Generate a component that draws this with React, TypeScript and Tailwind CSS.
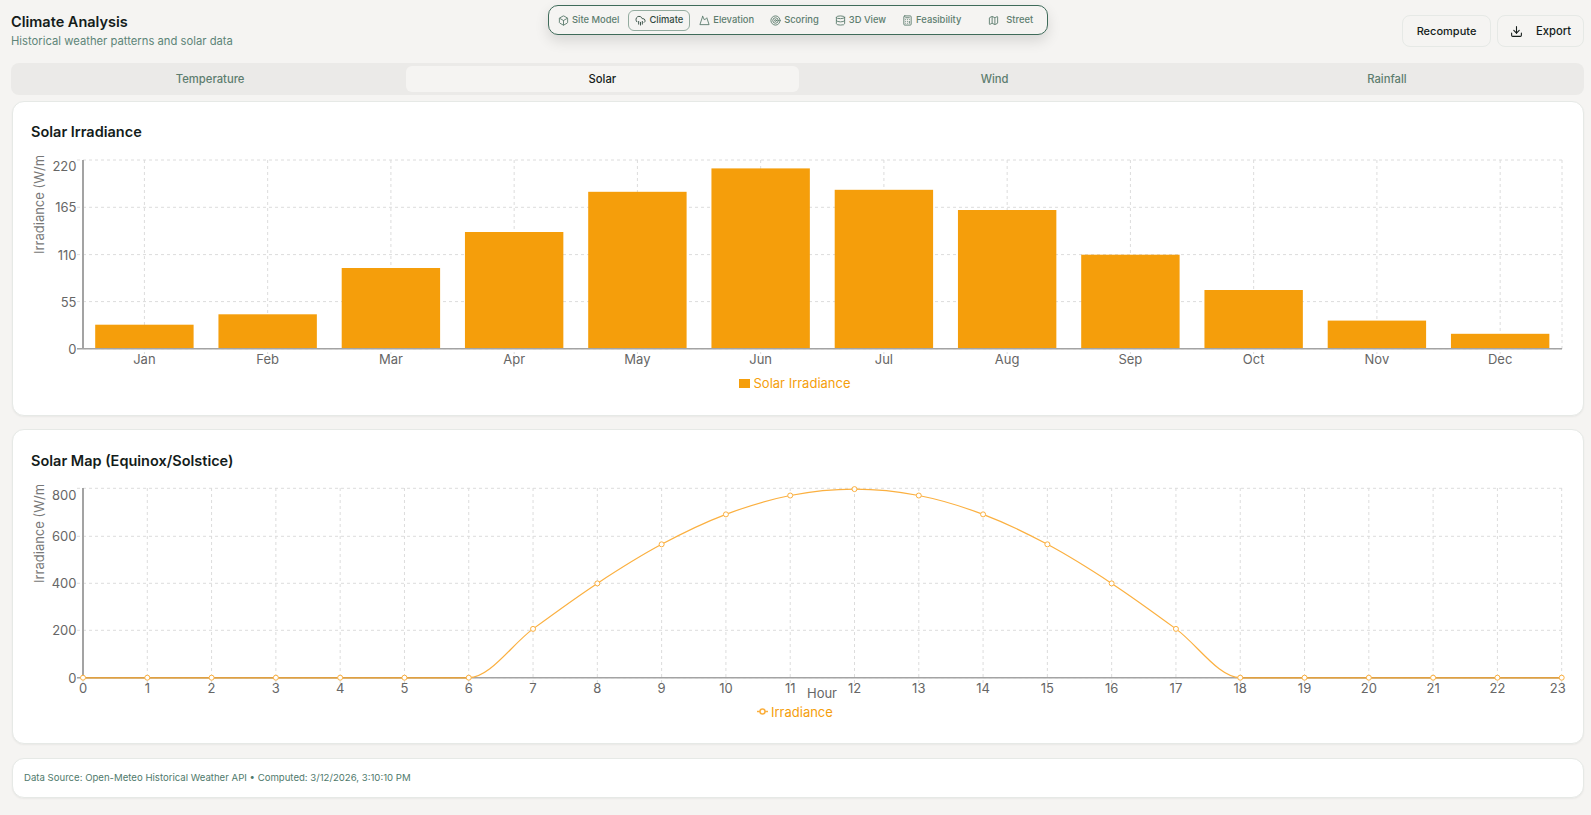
import React from "react";
import { Box, CloudRain, Mountain, Target, Database, Calculator, Map, Download } from "lucide-react";

const navItems = [
  { label: "Site Model", icon: Box },
  { label: "Climate", icon: CloudRain, active: true },
  { label: "Elevation", icon: Mountain },
  { label: "Scoring", icon: Target },
  { label: "3D View", icon: Database },
  { label: "Feasibility", icon: Calculator },
  { label: "Street", icon: Map, extra: true },
];

const tabs = ["Temperature", "Solar", "Wind", "Rainfall"];

const months = ["Jan", "Feb", "Mar", "Apr", "May", "Jun", "Jul", "Aug", "Sep", "Oct", "Nov", "Dec"];
// top edge of each bar, read from the reference
const barTops = [324.7, 314.3, 268, 232, 191.8, 168.4, 189.8, 210, 254.7, 290, 320.6, 333.8];

const GRID = "#dcdcdc";
const AXIS = "#a3a3a3";
const ORANGE = "#f59e0b";
const LABEL = "#666666";

const hourX = (h: number) => 83 + (h * 1478.7) / 23;
const irrY = (v: number) => 677.7 - (v / 800) * 188.6;
const hours = Array.from({ length: 24 }, (_, i) => i);
const irr = hours.map((h) => (h > 6 && h < 18 ? 800 * Math.sin((Math.PI * (h - 6)) / 12) : 0));

// monotone cubic through the hourly points, same as the chart lib does
function curve() {
  const pts = hours.map((h) => [hourX(h), irrY(irr[h])]);
  const d = pts.slice(0, -1).map((p, i) => (pts[i + 1][1] - p[1]) / (pts[i + 1][0] - p[0]));
  const m = pts.map((_, i) => {
    if (i === 0) return d[0];
    if (i === pts.length - 1) return d[d.length - 1];
    return d[i - 1] * d[i] <= 0 ? 0 : (d[i - 1] + d[i]) / 2;
  });
  let path = `M${pts[0][0]},${pts[0][1]}`;
  for (let i = 0; i < pts.length - 1; i++) {
    const dx = (pts[i + 1][0] - pts[i][0]) / 3;
    path += ` C${pts[i][0] + dx},${pts[i][1] + m[i] * dx} ${pts[i + 1][0] - dx},${pts[i + 1][1] - m[i + 1] * dx} ${pts[i + 1][0]},${pts[i + 1][1]}`;
  }
  return path;
}

function BarChart() {
  const ys = [160, 207.3, 254.6, 301.6, 348.7];
  const labels = ["220", "165", "110", "55", "0"];
  return (
    <svg viewBox="31 150 1540 250" className="block w-[1540px] h-[250px]" fontFamily="Inter, sans-serif" fontSize="13">
      {ys.map((y) => (
        <line key={y} x1="77" x2="1562" y1={y} y2={y} stroke={GRID} strokeDasharray="3 3" />
      ))}
      {months.map((m, i) => {
        const x = 144.4 + i * 123.25;
        return <line key={m} x1={x} x2={x} y1="160" y2="354" stroke={GRID} strokeDasharray="3 3" />;
      })}
      <line x1="1562" x2="1562" y1="160" y2="349" stroke={GRID} strokeDasharray="3 3" />
      {months.map((m, i) => {
        const x = 144.4 + i * 123.25;
        return <rect key={m} x={x - 49.2} y={barTops[i]} width="98.4" height={348.7 - barTops[i]} fill={ORANGE} />;
      })}
      <line x1="83" x2="83" y1="160" y2="349" stroke={AXIS} strokeWidth="2" />
      <line x1="77" x2="1562" y1="348.7" y2="348.7" stroke={AXIS} strokeWidth="1.5" />
      {labels.map((l, i) => (
        <text key={l} x="76.5" y={(i === 0 ? 166 : ys[i]) + 5} textAnchor="end" fill={LABEL}>
          {l}
        </text>
      ))}
      {months.map((m, i) => (
        <text key={m} x={144.4 + i * 123.25} y="364" textAnchor="middle" fill={LABEL}>
          {m}
        </text>
      ))}
      <text transform="translate(44,254) rotate(-90)" fill="#777777">
        Irradiance (W/m
      </text>
      <rect x="739" y="379" width="11" height="9" fill={ORANGE} />
      <text x="753.5" y="388" fill={ORANGE}>
        Solar Irradiance
      </text>
    </svg>
  );
}

function LineChart() {
  const ys = [488.3, 536.3, 583.3, 630.3, 677.7];
  const labels = ["800", "600", "400", "200", "0"];
  return (
    <svg viewBox="31 479 1540 250" className="block w-[1540px] h-[250px]" fontFamily="Inter, sans-serif" fontSize="13">
      {ys.map((y) => (
        <line key={y} x1="77" x2="1562" y1={y} y2={y} stroke={GRID} strokeDasharray="3 3" />
      ))}
      {hours.map((h) => (
        <line key={h} x1={hourX(h)} x2={hourX(h)} y1="488" y2="683" stroke={GRID} strokeDasharray="3 3" />
      ))}
      <line x1="83" x2="83" y1="488" y2="678" stroke={AXIS} strokeWidth="2" />
      <line x1="77" x2="1562" y1="677.7" y2="677.7" stroke={AXIS} strokeWidth="1.5" />
      <path d={curve()} fill="none" stroke="#fbb040" strokeWidth="1.2" />
      <line x1="83" x2={hourX(6)} y1="677.7" y2="677.7" stroke="#e0a040" strokeWidth="1.5" />
      <line x1={hourX(18)} x2="1562" y1="677.7" y2="677.7" stroke="#e0a040" strokeWidth="1.5" />
      {hours.map((h) => (
        <circle key={h} cx={hourX(h)} cy={irrY(irr[h])} r="2.5" fill="#fff" stroke="#fbb040" strokeWidth="1" />
      ))}
      {labels.map((l, i) => (
        <text key={l} x="76.5" y={(i === 0 ? 495 : ys[i]) + 5} textAnchor="end" fill={LABEL}>
          {l}
        </text>
      ))}
      {hours.map((h) => (
        <text key={h} x={h === 23 ? 1557.7 : hourX(h)} y="693" textAnchor="middle" fill={LABEL}>
          {h}
        </text>
      ))}
      <text x="822" y="698" textAnchor="middle" fill={LABEL}>
        Hour
      </text>
      <text transform="translate(44,583) rotate(-90)" fill="#777777">
        Irradiance (W/m
      </text>
      <line x1="757" x2="768" y1="711.5" y2="711.5" stroke="#fbb040" strokeWidth="1.5" />
      <circle cx="762.5" cy="711.5" r="2.5" fill="#fff" stroke="#fbb040" strokeWidth="1.5" />
      <text x="771" y="716.5" fill={ORANGE}>
        Irradiance
      </text>
    </svg>
  );
}

export default function App() {
  return (
    <div className="relative min-h-[815px] bg-[#f5f4f2] pl-3 pr-[7px] font-['Inter',sans-serif] text-[#141c1a]">
      <div className="absolute left-[548px] top-[5px] flex h-[30px] items-center gap-[2px] rounded-[10px] border border-[#3f6b5a] bg-[#f5f4f2] px-[2px] shadow-[0_6px_14px_rgba(0,0,0,0.12)]">
        {navItems.map((n) => {
          const Icon = n.icon;
          return (
            <div
              key={n.label}
              className={
                n.active
                  ? "flex h-[21px] items-center gap-[3px] rounded-md border border-[#93ab9f] px-[6px] text-[9.4px] font-medium text-[#31493f]"
                  : n.extra
                    ? "ml-[11px] flex h-[21px] items-center gap-[7px] pl-[7px] pr-[12px] text-[9.4px] font-medium text-[#5d7d6f]"
                    : "flex h-[21px] items-center gap-[3px] px-[7px] text-[9.4px] font-medium text-[#5d7d6f]"
              }
            >
              <Icon className="h-[11px] w-[11px]" strokeWidth={2} />
              <span>{n.label}</span>
            </div>
          );
        })}
      </div>

      <header className="flex h-[63px] items-start justify-between">
        <div className="-ml-px pt-[13px]">
          <h1 className="text-[14.5px] leading-[18px] font-semibold">Climate Analysis</h1>
          <p className="mt-[3px] text-[11.25px] leading-[14px] text-[#5d8578]">Historical weather patterns and solar data</p>
        </div>
        <div className="flex gap-[6px] pt-[15px]">
          <button className="h-[32px] w-[89px] rounded-lg border border-[#e6e9e6] text-[11px] font-medium">Recompute</button>
          <button className="flex h-[32px] w-[87px] items-center justify-center gap-[13px] rounded-lg border border-[#e6e9e6] text-[11.25px] font-medium">
            <Download className="h-[13px] w-[13px]" />
            Export
          </button>
        </div>
      </header>

      <div className="-ml-px grid h-[32px] grid-cols-4 rounded-lg bg-[#ebeae8] pl-[3px] pr-px py-[3px]">
        {tabs.map((t) => (
          <div
            key={t}
            className={
              t === "Solar"
                ? "flex items-center justify-center rounded-md bg-[#f5f4f2] text-[11.25px] font-medium text-[#141c1a]"
                : "flex items-center justify-center text-[11.25px] font-medium text-[#5d7d6f]"
            }
          >
            {t}
          </div>
        ))}
      </div>

      <section className="mt-[6px] h-[315px] rounded-xl border border-[#e6e9e6] bg-white pl-[18px] pt-[21px] shadow-[0_1px_2px_rgba(0,0,0,0.05)]">
        <h2 className="h-[27px] text-[14.5px] leading-[18px] font-semibold">Solar Irradiance</h2>
        <BarChart />
      </section>

      <section className="mt-[13px] h-[315px] rounded-xl border border-[#e6e9e6] bg-white pl-[18px] pt-[22px] shadow-[0_1px_2px_rgba(0,0,0,0.05)]">
        <h2 className="h-[27px] text-[14.5px] leading-[18px] font-semibold">Solar Map (Equinox/Solstice)</h2>
        <LineChart />
      </section>

      <footer className="mt-[14px] flex h-[40px] items-center rounded-xl border border-[#e6e9e6] bg-white pl-[11px] text-[9.6px] text-[#4f7a6c] shadow-[0_1px_2px_rgba(0,0,0,0.05)]">
        Data Source: Open-Meteo Historical Weather API • Computed: 3/12/2026, 3:10:10 PM
      </footer>
    </div>
  );
}
